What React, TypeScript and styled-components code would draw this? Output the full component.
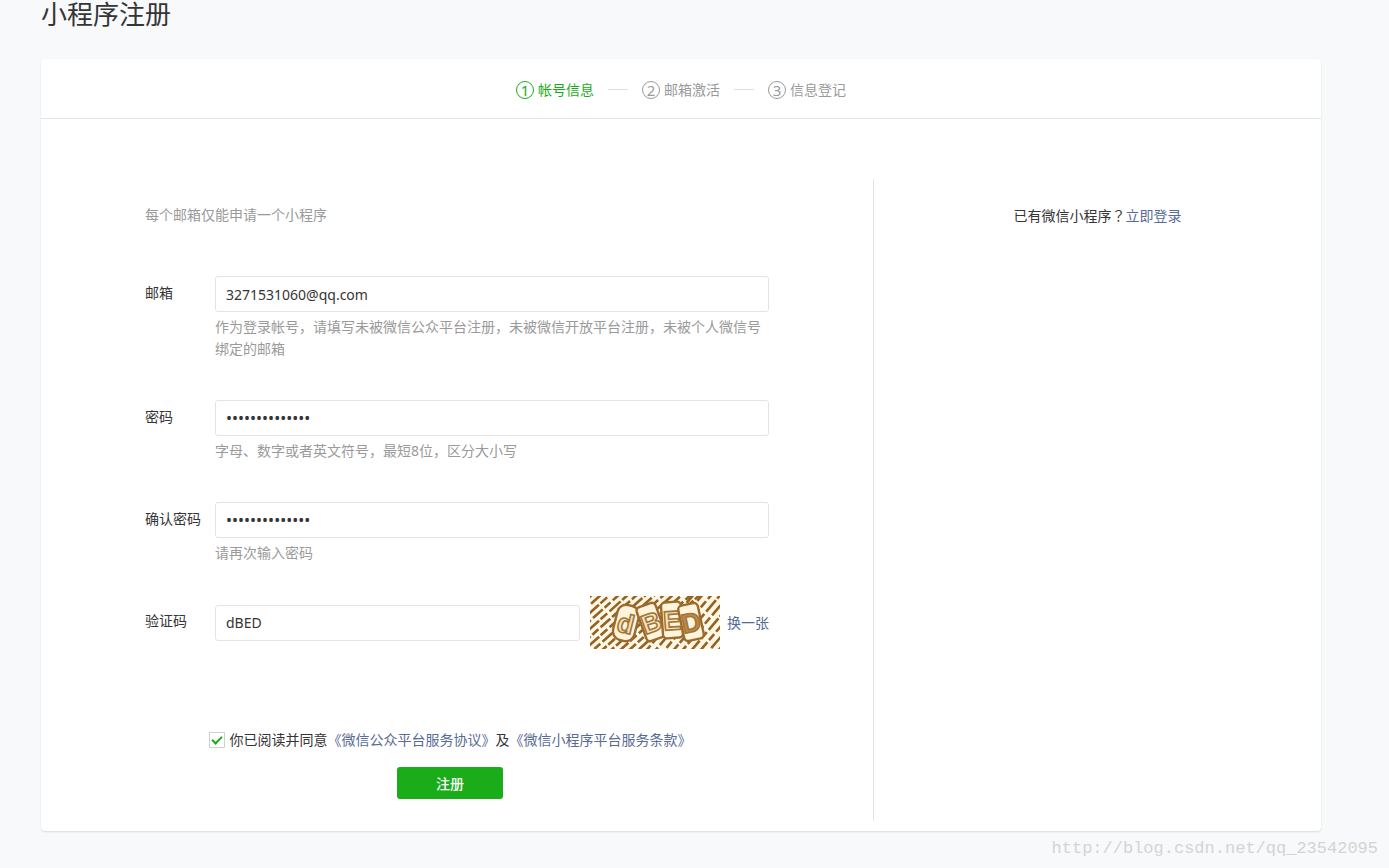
import React, { useState } from "react";
import styled, { createGlobalStyle } from "styled-components";

const GlobalStyle = createGlobalStyle`
  *, *::before, *::after { box-sizing: border-box; }
  body {
    margin: 0;
    background: #f8f9fb;
    color: #353535;
    font-family: "Noto Sans", "Noto Sans CJK SC", sans-serif;
    font-size: 14px;
    line-height: 22px;
  }
`;

const Page = styled.div`
  padding: 0 68px 0 41px;
`;

const Title = styled.h1`
  margin: 0 0 31px;
  font-size: 26px;
  line-height: 28px;
  font-weight: 400;
`;

const Card = styled.main`
  background: #fff;
  border-radius: 4px;
  box-shadow: 0 1px 2px rgba(0, 0, 0, 0.12);
`;

const Steps = styled.ol`
  display: flex;
  align-items: center;
  justify-content: center;
  gap: 14px;
  height: 60px;
  margin: 0;
  padding: 2px 0 0;
  list-style: none;
  border-bottom: 1px solid #e4e4e4;
`;

const Step = styled.li<{ $active?: boolean }>`
  display: flex;
  align-items: center;
  gap: 4px;
  color: ${(p) => (p.$active ? "#1aad19" : "#9a9a9a")};
`;

const StepNumber = styled.span`
  width: 18px;
  height: 18px;
  border: 1px solid currentColor;
  border-radius: 50%;
  text-align: center;
  font-size: 15px;
  line-height: 16px;
`;

const StepLine = styled.li`
  width: 20px;
  height: 1px;
  background: #e0e0e0;
`;

const Body = styled.div`
  display: flex;
  padding: 60px 0 10px;
`;

const FormColumn = styled.form`
  width: 65%;
  padding: 25px 104px 22px;
`;

const SideColumn = styled.aside`
  flex: 1;
  padding-top: 25px;
  border-left: 1px solid #e4e4e4;
  text-align: center;
`;

const CenteredMark = styled.span`
  font-family: "Noto Sans CJK TC", sans-serif;
`;

const Intro = styled.p`
  margin: 0 0 50px;
  color: #9a9a9a;
`;

const Field = styled.div`
  display: grid;
  grid-template-columns: 70px 1fr;
  margin-bottom: 40px;
`;

const Label = styled.label`
  line-height: 34px;
`;

const CaptchaField = styled(Field)`
  margin-top: -8px;
  margin-bottom: 80px;

  ${Label} {
    padding-top: 8px;
  }
`;

const TextInput = styled.input`
  display: block;
  width: 100%;
  min-width: 0;
  height: 36px;
  padding: 0 10px;
  border: 1px solid #e4e4e4;
  border-radius: 3px;
  background: #fff;
  color: #353535;
  font: inherit;
  outline: none;

  &[type="password"] {
    font-size: 16px;
  }
`;

const Hint = styled.p`
  margin: 4px 0 0;
  color: #9a9a9a;
`;

const CaptchaRow = styled.div`
  display: flex;
  align-items: center;
`;

const CaptchaImage = styled.svg`
  flex: none;
  width: 130px;
  height: 53px;
  margin: 0 7px 0 10px;
`;

const Link = styled.a`
  flex: none;
  color: #576b95;
  text-decoration: none;
`;

const Actions = styled.div`
  display: flex;
  flex-direction: column;
  align-items: center;
  gap: 16px;
  padding-right: 14px;
`;

const Agreement = styled.div`
  display: flex;
  align-items: center;
  gap: 5px;
  white-space: nowrap;
`;

const Checkbox = styled.input`
  appearance: none;
  display: grid;
  place-items: center;
  width: 16px;
  height: 16px;
  margin: 0;
  border: 1px solid #d0d0d0;
  background: #fff;

  &:checked::after {
    content: "";
    width: 10px;
    height: 6px;
    margin-bottom: 3px;
    border: solid #1aad19;
    border-width: 0 0 2px 2px;
    transform: rotate(-45deg);
  }
`;

const SubmitButton = styled.button`
  width: 106px;
  height: 32px;
  padding: 1px 0 0;
  border: 0;
  border-radius: 3px;
  background: #1aad19;
  color: #fff;
  font: inherit;
  font-weight: 500;
  cursor: pointer;
`;

const Footer = styled.footer`
  margin-right: -68px;
  padding: 7px 11px 0 0;
  color: #d3d5d1;
  font-family: "Liberation Mono", monospace;
  font-size: 17px;
  text-align: right;
`;

const steps = ["帐号信息", "邮箱激活", "信息登记"];

const captchaLetters = [
  { char: "d", x: 36, y: 27, w: 22, angle: 14 },
  { char: "B", x: 61, y: 26, w: 20, angle: -20 },
  { char: "E", x: 82, y: 24, w: 20, angle: -4 },
  { char: "D", x: 101, y: 26, w: 20, angle: -12 },
];

const hatchRows = Array.from({ length: 22 }, (_, i) => i);

function Captcha() {
  return (
    <CaptchaImage viewBox="0 0 130 53" role="img" aria-label="验证码图片">
      <rect width="130" height="53" fill="#fff8e6" />
      <g stroke="#946223" strokeWidth="2.6" fill="none">
        {hatchRows.map((i) => (
          <path
            key={i}
            d={`M${i * 9 - 62} 56 L${i * 9 + (i > 12 ? -12 : 4)} -3`}
            strokeDasharray={i % 2 ? "13 2.5 8 3" : "9 3 15 2"}
            strokeDashoffset={(i * 7) % 19}
          />
        ))}
      </g>
      {captchaLetters.map((l) => (
        <g key={l.char} transform={`rotate(${l.angle} ${l.x} ${l.y})`}>
          <rect x={l.x - l.w / 2} y={l.y - 18} width={l.w} height="36" rx={l.char === "d" ? 9 : 4} fill="#fff4dc" stroke="#9c6b2c" strokeWidth="2.4" />
          <text
            x={l.x}
            y={l.y + 10}
            textAnchor="middle"
            fontFamily="Liberation Sans, sans-serif"
            fontWeight="700"
            fontSize="27"
            fill={l.char === "D" ? "#b98a4c" : "#f6e3bd"}
            stroke="#a37638"
            strokeWidth="1.6"
          >
            {l.char}
          </text>
        </g>
      ))}
    </CaptchaImage>
  );
}

export default function App() {
  const [email, setEmail] = useState("3271531060@qq.com");
  const [password, setPassword] = useState("abcdefgh123456");
  const [confirm, setConfirm] = useState("abcdefgh123456");
  const [code, setCode] = useState("dBED");
  const [agreed, setAgreed] = useState(true);

  return (
    <>
      <GlobalStyle />
      <Page>
        <Title>小程序注册</Title>
        <Card>
          <Steps>
            {steps.map((name, i) => (
              <React.Fragment key={name}>
                {i > 0 && <StepLine aria-hidden="true" />}
                <Step $active={i === 0}>
                  <StepNumber>{i + 1}</StepNumber>
                  {name}
                </Step>
              </React.Fragment>
            ))}
          </Steps>
          <Body>
            <FormColumn onSubmit={(e) => e.preventDefault()}>
              <Intro>每个邮箱仅能申请一个小程序</Intro>
              <Field>
                <Label htmlFor="email">邮箱</Label>
                <div>
                  <TextInput id="email" value={email} onChange={(e) => setEmail(e.target.value)} />
                  <Hint>作为登录帐号，请填写未被微信公众平台注册，未被微信开放平台注册，未被个人微信号绑定的邮箱</Hint>
                </div>
              </Field>
              <Field>
                <Label htmlFor="password">密码</Label>
                <div>
                  <TextInput id="password" type="password" value={password} onChange={(e) => setPassword(e.target.value)} />
                  <Hint>字母、数字或者英文符号，最短8位，区分大小写</Hint>
                </div>
              </Field>
              <Field>
                <Label htmlFor="confirm">确认密码</Label>
                <div>
                  <TextInput id="confirm" type="password" value={confirm} onChange={(e) => setConfirm(e.target.value)} />
                  <Hint>请再次输入密码</Hint>
                </div>
              </Field>
              <CaptchaField>
                <Label htmlFor="code">验证码</Label>
                <CaptchaRow>
                  <TextInput id="code" value={code} onChange={(e) => setCode(e.target.value)} />
                  <Captcha />
                  <Link href="#captcha">换一张</Link>
                </CaptchaRow>
              </CaptchaField>
              <Actions>
                <Agreement>
                  <Checkbox id="agree" type="checkbox" checked={agreed} onChange={(e) => setAgreed(e.target.checked)} />
                  <label htmlFor="agree">
                    你已阅读并同意<Link href="#service">《微信公众平台服务协议》</Link>及<Link href="#terms">《微信小程序平台服务条款》</Link>
                  </label>
                </Agreement>
                <SubmitButton type="submit">注册</SubmitButton>
              </Actions>
            </FormColumn>
            <SideColumn>
              已有微信小程序<CenteredMark>？</CenteredMark><Link href="#login">立即登录</Link>
            </SideColumn>
          </Body>
        </Card>
        <Footer>http://blog.csdn.net/qq_23542095</Footer>
      </Page>
    </>
  );
}
